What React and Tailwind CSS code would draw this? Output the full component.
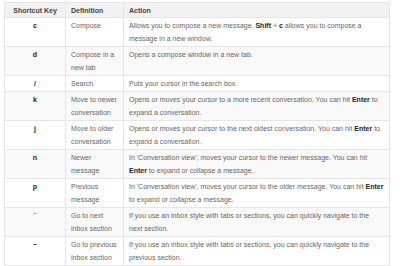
const rows = [
  { key: 'c', def: ['Compose'], action: [
    <>Allows you to compose a new message. <b className="text-[#222]">Shift</b> + <b className="text-[#222]">c</b> allows you to compose a</>,
    <>message in a new window.</>,
  ] },
  { key: 'd', def: ['Compose in a', 'new tab'], action: [<>Opens a compose window in a new tab.</>] },
  { key: '/', def: ['Search'], action: [<>Puts your cursor in the search box.</>] },
  { key: 'k', def: ['Move to newer', 'conversation'], action: [
    <>Opens or moves your cursor to a more recent conversation. You can hit <b className="text-[#222]">Enter</b> to</>,
    <>expand a conversation.</>,
  ] },
  { key: 'j', def: ['Move to older', 'conversation'], action: [
    <>Opens or moves your cursor to the next oldest conversation. You can hit <b className="text-[#222]">Enter</b> to</>,
    <>expand a conversation.</>,
  ] },
  { key: 'n', def: ['Newer', 'message'], action: [
    <>In 'Conversation view', moves your cursor to the newer message. You can hit</>,
    <><b className="text-[#222]">Enter</b> to expand or collapse a message.</>,
  ] },
  { key: 'p', def: ['Previous', 'message'], action: [
    <>In 'Conversation view', moves your cursor to the older message. You can hit <b className="text-[#222]">Enter</b></>,
    <>to expand or collapse a message.</>,
  ] },
  { key: '`', def: ['Go to next', 'inbox section'], action: [
    <>If you use an inbox style with tabs or sections, you can quickly navigate to the</>,
    <>next section.</>,
  ] },
  { key: '~', def: ['Go to previous', 'inbox section'], action: [
    <>If you use an inbox style with tabs or sections, you can quickly navigate to the</>,
    <>previous section.</>,
  ] },
];

function Lines({ lines }) {
  return lines.map((l, i) => (
    <div key={i} className="whitespace-nowrap">{l}</div>
  ));
}

export default function App() {
  return (
    <div className="w-[400px] h-[266px] bg-white pt-[2px] pl-[4px] font-['Liberation_Sans',Arial,sans-serif] text-[7px] leading-[13px] text-[#666]">
      <table className="w-[386px] border-collapse table-fixed border border-[#e6e6e6]">
        <colgroup>
          <col className="w-[61px]" />
          <col className="w-[58px]" />
          <col />
        </colgroup>
        <thead>
          <tr className="bg-[#f2f2f2] text-[#444] font-bold">
            <th className="text-center pt-[1px] pb-0 border border-[#e6e6e6] font-bold">Shortcut Key</th>
            <th className="text-left pl-[5px] pt-[1px] pb-0 border border-[#e6e6e6] font-bold">Definition</th>
            <th className="text-left pl-[5px] pt-[1px] pb-0 border border-[#e6e6e6] font-bold">Action</th>
          </tr>
        </thead>
        <tbody>
          {rows.map((r, i) => (
            <tr key={r.key} className={i % 2 === 1 ? 'bg-[#f9f9f9]' : 'bg-white'}>
              <td className="align-top text-center pt-[1px] pb-[1px] border border-[#e6e6e6] font-bold text-[#222]">{r.key}</td>
              <td className="align-top pl-[5px] pt-[1px] pb-[1px] border border-[#e6e6e6]"><Lines lines={r.def} /></td>
              <td className="align-top pl-[5px] pt-[1px] pb-[1px] border border-[#e6e6e6]"><Lines lines={r.action} /></td>
            </tr>
          ))}
        </tbody>
      </table>
    </div>
  );
}
